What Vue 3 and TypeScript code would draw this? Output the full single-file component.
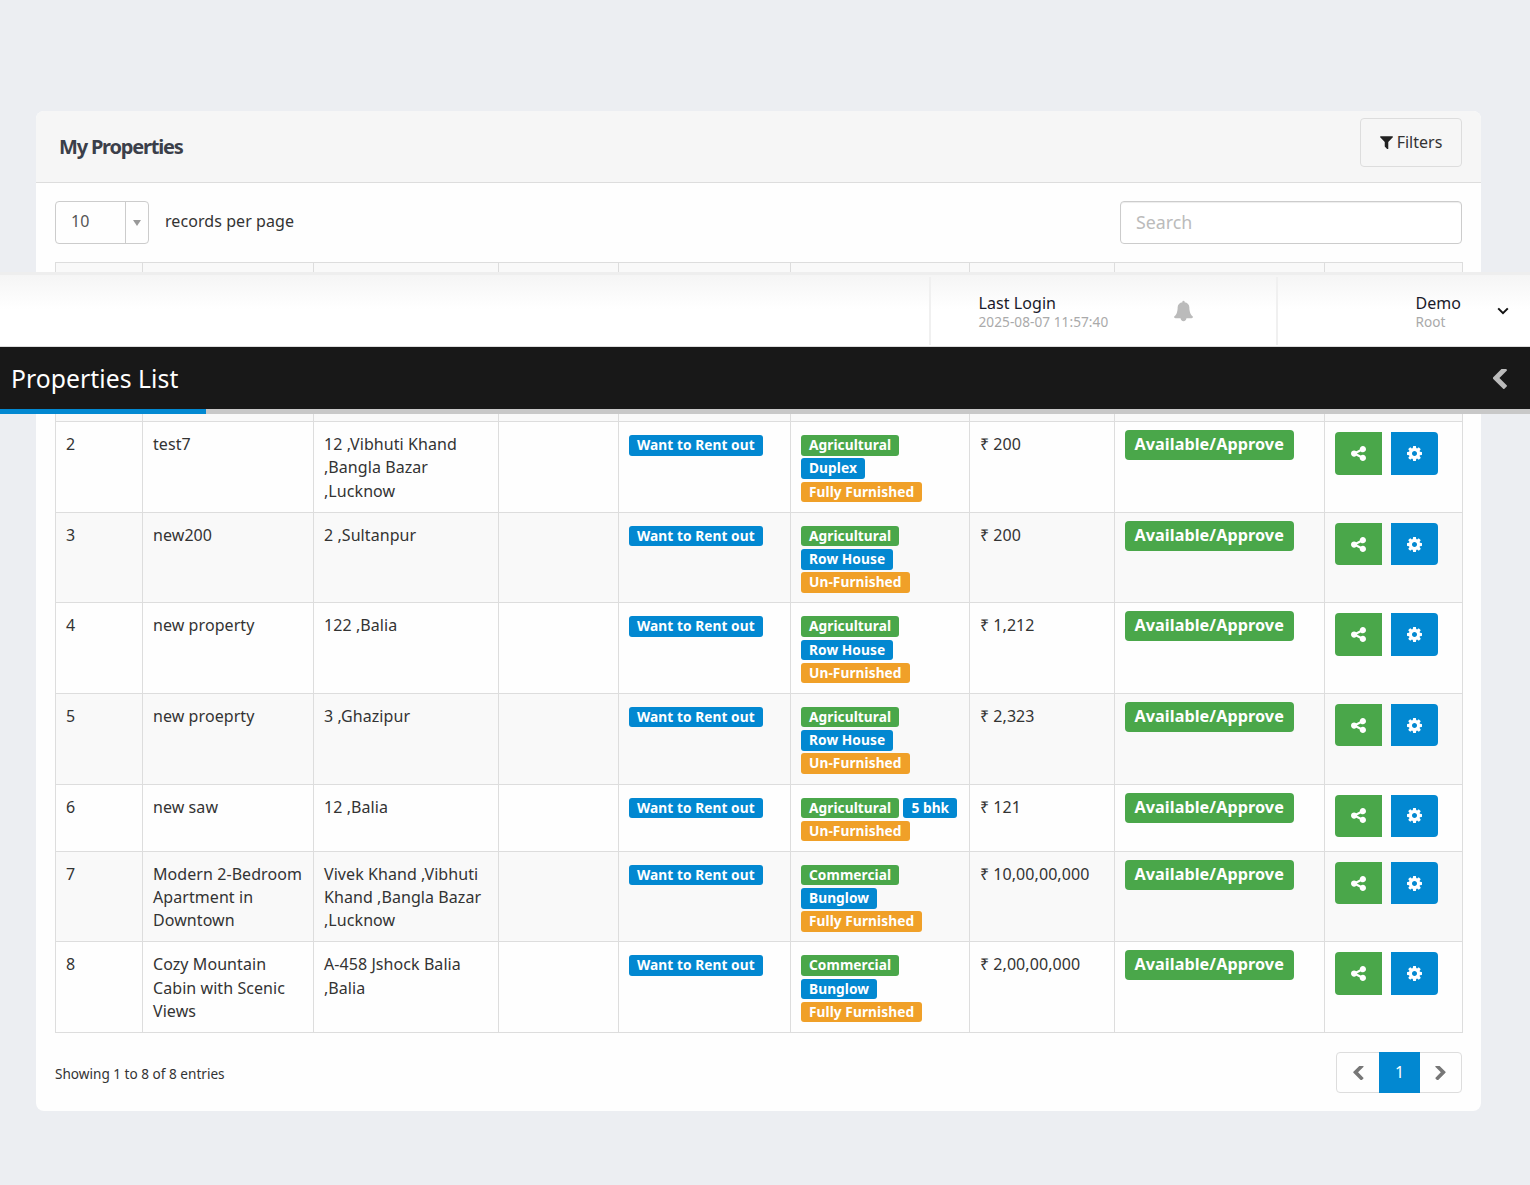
<script setup lang="ts">
interface Tag { text: string; tone: 'green' | 'blue' | 'orange' }
interface Row { id: number; title: string; address: string; price: string; tags: Tag[] }

const g = (text: string): Tag => ({ text, tone: 'green' })
const b = (text: string): Tag => ({ text, tone: 'blue' })
const o = (text: string): Tag => ({ text, tone: 'orange' })

const rows: Row[] = [
  { id: 2, title: 'test7', address: '12 ,Vibhuti Khand ,Bangla Bazar ,Lucknow', price: '200', tags: [g('Agricultural'), b('Duplex'), o('Fully Furnished')] },
  { id: 3, title: 'new200', address: '2 ,Sultanpur', price: '200', tags: [g('Agricultural'), b('Row House'), o('Un-Furnished')] },
  { id: 4, title: 'new property', address: '122 ,Balia', price: '1,212', tags: [g('Agricultural'), b('Row House'), o('Un-Furnished')] },
  { id: 5, title: 'new proeprty', address: '3 ,Ghazipur', price: '2,323', tags: [g('Agricultural'), b('Row House'), o('Un-Furnished')] },
  { id: 6, title: 'new saw', address: '12 ,Balia', price: '121', tags: [g('Agricultural'), b('5 bhk'), o('Un-Furnished')] },
  { id: 7, title: 'Modern 2-Bedroom Apartment in Downtown', address: 'Vivek Khand ,Vibhuti Khand ,Bangla Bazar ,Lucknow', price: '10,00,00,000', tags: [g('Commercial'), b('Bunglow'), o('Fully Furnished')] },
  { id: 8, title: 'Cozy Mountain Cabin with Scenic Views', address: 'A-458 Jshock Balia ,Balia', price: '2,00,00,000', tags: [g('Commercial'), b('Bunglow'), o('Fully Furnished')] },
]
const colWidths: number[] = [87, 171, 185, 120, 172, 179, 145, 210, 138]
</script>

<template>
  <div class="page">
    <section class="card">
      <header class="card-head">
        <h1>My Properties</h1>
        <button class="filters" type="button">
          <svg class="filter-icon" viewBox="190 250 1410 1350"><path d="M1595 295q17 41-14 70l-493 493v742q0 42-39 59-13 5-25 5-27 0-45-19l-256-256q-19-19-19-45v-486l-493-493q-31-29-14-70 17-39 59-39h1280q42 0 59 39z"/></svg>
          Filters
        </button>
      </header>

      <div class="card-body">
        <div class="toolbar">
          <div class="length">
            <div class="select"><span class="select-value">10</span><span class="select-arrow"><i></i></span></div>
            <span>records per page</span>
          </div>
          <input class="search" type="text" placeholder="Search" />
        </div>

        <table class="grid">
          <colgroup><col v-for="(w, i) in colWidths" :key="i" :style="{ width: w + 'px' }" /></colgroup>
          <tbody>
            <tr class="covered"><td v-for="(w, i) in colWidths" :key="i"></td></tr>
            <tr v-for="row in rows" :key="row.id">
              <td>{{ row.id }}</td>
              <td>{{ row.title }}</td>
              <td>{{ row.address }}</td>
              <td></td>
              <td><span class="tag blue">Want to Rent out</span></td>
              <td>
                <template v-for="tag in row.tags" :key="tag.text">
                  <span class="tag" :class="tag.tone">{{ tag.text }}</span>{{ ' ' }}
                </template>
              </td>
              <td><span class="rupee">₹</span> {{ row.price }}</td>
              <td class="status-cell"><span class="status">Available/Approve</span></td>
              <td class="action-cell">
                <div class="actions">
                  <button class="act share" type="button" aria-label="Share">
                    <svg viewBox="0 128 1536 1536"><path d="M1216 1024q133 0 226.5 93.5t93.5 226.5-93.5 226.5-226.5 93.5-226.5-93.5-93.5-226.5q0-12 2-34l-360-180q-92 86-218 86-133 0-226.5-93.5t-93.5-226.5 93.5-226.5 226.5-93.5q126 0 218 86l360-180q-2-22-2-34 0-133 93.5-226.5t226.5-93.5 226.5 93.5 93.5 226.5-93.5 226.5-226.5 93.5q-126 0-218-86l-360 180q2 22 2 34t-2 34l360 180q92-86 218-86z"/></svg>
                  </button>
                  <button class="act gear" type="button" aria-label="Settings">
                    <svg viewBox="0 -128 1536 1536"><path d="M1024 640q0-106-75-181t-181-75-181 75-75 181 75 181 181 75 181-75 75-181zm512-109v222q0 12-8 23t-20 13l-185 28q-19 54-39 91 35 50 107 138 10 12 10 25t-9 23q-27 37-99 108t-94 71q-12 0-26-9l-138-108q-44 23-91 38-16 136-29 186-7 28-36 28h-222q-14 0-24.5-8.5t-11.5-21.5l-28-184q-49-16-90-37l-141 107q-10 9-25 9-14 0-25-11-126-114-165-168-7-10-7-23 0-12 8-23 15-21 51-66.5t54-70.5q-27-50-41-99l-183-27q-13-2-21-12.5t-8-23.5v-222q0-12 8-23t19-13l186-28q14-46 39-92-40-57-107-138-10-12-10-24 0-10 9-23 26-36 98.5-107.5t94.5-71.5q13 0 26 10l138 107q44-23 91-38 16-136 29-186 7-28 36-28h222q14 0 24.5 8.5t11.5 21.5l28 184q49 16 90 37l142-107q9-9 24-9 13 0 25 10 129 119 165 170 7 8 7 22 0 12-8 23-15 21-51 66.5t-54 70.5q26 50 41 98l183 28q13 2 21 12.5t8 23.5z"/></svg>
                  </button>
                </div>
              </td>
            </tr>
          </tbody>
        </table>

        <footer class="table-foot">
          <span class="showing">Showing 1 to 8 of 8 entries</span>
          <nav class="pager">
            <a class="pg"><svg viewBox="429 200 1020 1400"><path d="M1427 301l-531 531 531 531q19 19 19 45t-19 45l-166 166q-19 19-45 19t-45-19l-742-742q-19-19-19-45t19-45l742-742q19-19 45-19t45 19l166 166q19 19 19 45t-19 45z"/></svg></a>
            <a class="pg active">1</a>
            <a class="pg"><svg viewBox="345 200 1040 1400"><path d="M1363 877l-742 742q-19 19-45 19t-45-19l-166-166q-19-19-19-45t19-45l531-531-531-531q-19-19-19-45t19-45l166-166q19-19 45-19t45 19l742 742q19 19 19 45t-19 45z"/></svg></a>
          </nav>
        </footer>
      </div>
    </section>

    <div class="topbar">
      <div class="infobar">
        <div class="login">
          <div class="login-text">
            <div class="primary">Last Login</div>
            <div class="secondary">2025-08-07 11:57:40</div>
          </div>
          <svg class="bell" viewBox="64 0 1664 1792"><path d="M1728 1408q0 52-38 90t-90 38h-448q0 106-75 181t-181 75-181-75-75-181h-448q-52 0-90-38t-38-90q50-42 91-88t85-119.5 74.5-158.5 50-206 19.5-260q0-152 117-282.5t307-158.5q-8-19-8-39 0-40 28-68t68-28 68 28 28 68q0 20-8 39 190 28 307 158.5t117 282.5q0 139 19.5 260t50 206 74.5 158.5 85 119.5 91 88z"/></svg>
        </div>
        <div class="user">
          <div class="user-text">
            <div class="primary">Demo</div>
            <div class="secondary">Root</div>
          </div>
          <svg class="caret" viewBox="0 0 12 8"><path d="M1.200 1.400 6 6.200l4.800-4.800" /></svg>
        </div>
      </div>
      <div class="titlebar">
        <h2>Properties List</h2>
        <svg class="collapse" viewBox="429 200 1020 1400"><path d="M1427 301l-531 531 531 531q19 19 19 45t-19 45l-166 166q-19 19-45 19t-45-19l-742-742q-19-19-19-45t19-45l742-742q19-19 45-19t45 19l166 166q19 19 19 45t-19 45z"/></svg>
      </div>
      <div class="progress"><div class="progress-fill"></div></div>
    </div>
  </div>
</template>

<style>
html, body { margin: 0; background: #eceef2; }
</style>

<style scoped>
.page {
  position: relative;
  box-sizing: border-box;
  height: 1185px;
  padding: 111px 49px 0 36px;
  overflow: hidden;
  font-family: "Noto Sans", "DejaVu Sans", sans-serif;
  font-size: 16px;
  line-height: 1.45;
  letter-spacing: 0.07px;
  color: #333;
}
.card {
  height: 1000px;
  border-radius: 8px;
  background: #fefefe;
  overflow: hidden;
}
.card-head {
  box-sizing: border-box;
  height: 72px;
  display: flex;
  align-items: flex-start;
  justify-content: space-between;
  padding: 7px 19px 0 23px;
  background: #f6f6f6;
  border-bottom: 1px solid #ddd;
}
.card-head h1 {
  margin: 15px 0 0;
  font-size: 20px;
  font-weight: 700;
  letter-spacing: -1.2px;
  line-height: 28px;
  color: #3b3f4a;
}
.filters {
  display: flex;
  align-items: center;
  justify-content: center;
  gap: 4px;
  width: 102px;
  height: 49px;
  padding: 0;
  background: #f6f6f6;
  border: 1px solid #ddd;
  border-radius: 4px;
  font: inherit;
  color: #333;
}
.filter-icon { width: 13px; height: 13px; fill: #222; }
.card-body { padding: 18px 18px 0 19px; }
.toolbar {
  display: flex;
  justify-content: space-between;
  height: 43px;
  margin: 0 1px 18px 0;
}
.length { display: flex; align-items: center; gap: 16px; padding-bottom: 3px; }
.length > span { line-height: 22px; }
.select {
  box-sizing: border-box;
  display: flex;
  width: 94px;
  height: 43px;
  margin-bottom: -3px;
  border: 1px solid #ccc;
  border-radius: 4px;
  color: #555;
}
.select-value { flex: 1; padding: 8px 0 0 15px; }
.select-arrow {
  display: flex;
  align-items: center;
  justify-content: center;
  width: 22px;
  border-left: 1px solid #ccc;
}
.select-arrow i {
  width: 0;
  height: 0;
  border-left: 4px solid transparent;
  border-right: 4px solid transparent;
  border-top: 6px solid #999;
}
.search {
  box-sizing: border-box;
  width: 342px;
  height: 43px;
  padding: 0 15px 2px;
  border: 1px solid #ccc;
  border-radius: 4px;
  box-shadow: inset 0 1px 1px rgba(0, 0, 0, 0.075);
  outline: none;
  font: inherit;
  font-size: 17.8px;
  color: #555;
}
.search::placeholder { color: #bbb; opacity: 1; }
.grid {
  width: 1408px;
  table-layout: fixed;
  border-collapse: collapse;
}
.grid td {
  padding: 11px 10px 9px;
  border: 1px solid #ddd;
  vertical-align: top;
}
.grid tr.covered td { height: 138.300px; }
.grid tr:nth-child(odd) td { background: #f9f9f9; }
.grid tr:nth-child(even) td { background: #fefefe; }
.rupee { font-family: "Open Sans", sans-serif; }
.tag {
  display: inline-block;
  padding: 0 8px;
  border-radius: 3px;
  font-size: 13.700px;
  font-weight: 700;
  line-height: 20.500px;
  color: #fff;
  white-space: nowrap;
}
.green { background: #4aa74a; }
.blue { background: #0288d1; }
.orange { background: #f0a028; }
.grid .status-cell { padding-top: 8px; }
.grid .action-cell { padding-top: 10px; padding-bottom: 10px; }
.status {
  display: inline-block;
  padding: 0 10px 2px 9.500px;
  border-radius: 4px;
  background: #4aa74a;
  color: #fff;
  font-size: 16.200px;
  font-weight: 700;
  line-height: 28px;
  white-space: nowrap;
}
.actions { display: flex; gap: 9px; }
.act {
  display: flex;
  align-items: center;
  justify-content: center;
  width: 47px;
  height: 42.500px;
  padding: 0;
  border: 0;
}
.act svg { width: 15px; height: 15px; fill: #fff; }
.share { background: #4aa74a; border-radius: 4px 0 0 4px; }
.gear { background: #0288d1; border-radius: 0 4px 4px 0; }
.table-foot {
  display: flex;
  align-items: center;
  justify-content: space-between;
  margin: 19px 1px 0 0;
}
.showing { padding-top: 2px; font-size: 13.600px; letter-spacing: 0; }
.pager {
  box-sizing: border-box;
  display: flex;
  height: 41px;
  border: 1px solid #ddd;
  border-radius: 4px;
}
.pg {
  display: flex;
  align-items: center;
  justify-content: center;
  width: 42px;
  color: #777;
}
.pg:last-child { width: 41px; }
.pg svg { width: 11px; height: 14px; fill: #777; }
.pg.active {
  width: 41px;
  margin: -1px 0;
  background: #0288d1;
  color: #fff;
}
.topbar {
  position: absolute;
  top: 275px;
  left: 0;
  right: 0;
  box-shadow: 0 -3px 0 #eeeeee;
}
.infobar {
  box-sizing: border-box;
  display: flex;
  justify-content: flex-end;
  height: 72px;
  padding-top: 2px;
  background: linear-gradient(#f5f5f5, #fff 48%);
  border-bottom: 1px solid #ddd;
}
.login, .user {
  box-sizing: border-box;
  display: flex;
  align-items: flex-start;
  height: 68px;
  border-left: 2px solid #f0f0f0;
}
.login { width: 347px; padding: 15px 0 0 47.500px; }
.login-text { width: 195px; }
.user { width: 254px; padding: 15px 0 0 137.500px; }
.user-text { width: 81px; }
.primary { color: #1a1a2a; line-height: 22px; }
.secondary { margin-top: -2px; font-size: 13.600px; line-height: 20px; color: #aaa; }
.bell { width: 19px; height: 22px; margin-top: 8px; fill: #bbb; }
.caret {
  width: 12px;
  height: 8px;
  margin-top: 15px;
  fill: none;
  stroke: #111;
  stroke-width: 2;
}
.titlebar {
  box-sizing: border-box;
  display: flex;
  align-items: center;
  justify-content: space-between;
  height: 62px;
  padding: 2px 23px 0 11px;
  background: #181818;
}
.titlebar h2 {
  margin: 0;
  font-size: 24.700px;
  font-weight: 400;
  color: #fff;
}
.collapse { width: 14px; height: 20px; fill: #bbb; }
.progress { height: 5px; background: #c8c8c8; }
.progress-fill { width: 206px; height: 100%; background: #0288d1; }
</style>
